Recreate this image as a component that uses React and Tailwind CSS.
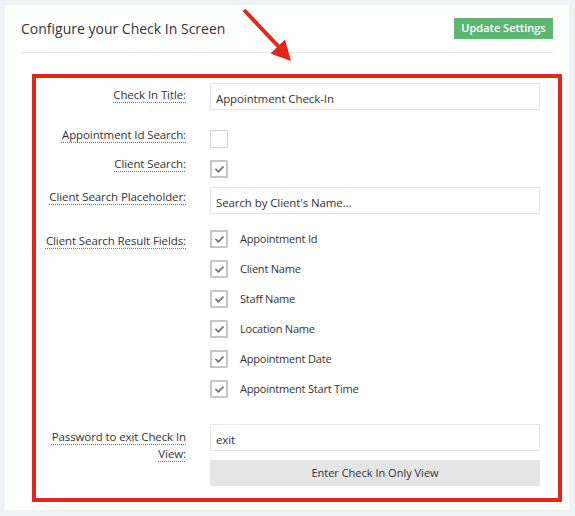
import React from "react";
import { FaCheck } from "react-icons/fa";

const labelClass =
  "w-[150px] shrink-0 pl-[8px] text-right text-[11.5px] leading-[17px] tracking-[-0.1px] text-[#333]";
const abbrClass =
  "underline decoration-dotted decoration-[#777] underline-offset-[3px]";

const resultFields = [
  "Appointment Id",
  "Client Name",
  "Staff Name",
  "Location Name",
  "Appointment Date",
  "Appointment Start Time",
];

const Checkbox = ({ checked }) =>
  checked ? (
    <span className="flex h-[18px] w-[18px] items-center justify-center border-2 border-[#c6c6c6] bg-white">
      <FaCheck size={9} className="text-[#777]" />
    </span>
  ) : (
    <span className="block h-[18px] w-[18px] border border-[#d2d2d2] bg-white"></span>
  );

const TextInput = ({ value }) => (
  <input
    readOnly
    value={value}
    className="block h-[27px] w-[330px] border border-[#e6e6e6] bg-white px-[5px] pt-[4px] text-[11.5px] tracking-[-0.1px] text-[#333] outline-none"
  />
);

export default function App() {
  return (
    <div
      className="relative h-[516px] w-[575px] overflow-hidden bg-[#eef2f5] pl-[5px] pt-[5px]"
      style={{ fontFamily: '"Open Sans", "Liberation Sans", sans-serif' }}
    >
      <div className="h-[505px] w-[564px] bg-white">
        {/* Header */}
        <div className="mx-[16px] flex items-center justify-between border-b border-[#e8e8e8] pb-[13px] pt-[13px]">
          <h2 className="text-[14px] leading-[21px] text-[#333]">
            Configure your Check In Screen
          </h2>
          <button className="h-[21px] w-[99px] bg-[#5cb870] text-[11px] font-semibold text-white">
            Update Settings
          </button>
        </div>

        {/* Settings form */}
        <div className="ml-[27px] mt-[21px] h-[428px] w-[530px] border-4 border-[#e2261c] pt-[5px]">
          <div className="flex gap-[24px]">
            <div className={`${labelClass} whitespace-nowrap pt-[3px]`}>
              <span className={abbrClass}>Check In Title:</span>
            </div>
            <TextInput value="Appointment Check-In" />
          </div>

          <div className="mt-[15px] flex gap-[24px]">
            <div className={`${labelClass} whitespace-nowrap pt-[1px]`}>
              <span className={abbrClass}>Appointment Id Search:</span>
            </div>
            <div className="pt-[5px]">
              <Checkbox checked={false} />
            </div>
          </div>

          <div className="mt-[6px] flex gap-[24px]">
            <div className={`${labelClass} whitespace-nowrap pt-[1px]`}>
              <span className={abbrClass}>Client Search:</span>
            </div>
            <div className="pt-[6px]">
              <Checkbox checked />
            </div>
          </div>

          <div className="mt-[9px] flex gap-[24px]">
            <div className={`${labelClass} whitespace-nowrap pt-[1px]`}>
              <span className={abbrClass}>Client Search Placeholder:</span>
            </div>
            <TextInput value="Search by Client's Name..." />
          </div>

          <div className="mt-[16px] flex gap-[24px]">
            <div className={`${labelClass} whitespace-nowrap pt-[2px]`}>
              <span className={abbrClass}>Client Search Result Fields:</span>
            </div>
            <div className="flex flex-col gap-[12px]">
              {resultFields.map((field) => (
                <div key={field} className="flex items-center gap-[12px]">
                  <Checkbox checked />
                  <span className="text-[11px] leading-[18px] tracking-[-0.2px] text-[#333]">
                    {field}
                  </span>
                </div>
              ))}
            </div>
          </div>

          <div className="mt-[26px] flex gap-[24px]">
            <div className={`${labelClass} pl-[12px] pt-[4px]`}>
              <span className={abbrClass}>Password to exit Check In View:</span>
            </div>
            <div>
              <TextInput value="exit" />
              <button className="mt-[9px] block h-[26px] w-[330px] bg-[#e5e5e5] text-[11px] text-[#333]">
                Enter Check In Only View
              </button>
            </div>
          </div>
        </div>
      </div>

      {/* Annotation arrow */}
      <svg
        className="pointer-events-none absolute left-0 top-0"
        width="575"
        height="80"
        viewBox="0 0 575 80"
      >
        <line
          x1="244"
          y1="10"
          x2="279"
          y2="47"
          stroke="#e2261c"
          strokeWidth="4"
        />
        <polygon points="291,61 270.5,53.5 285,39.5" fill="#e2261c" />
      </svg>
    </div>
  );
}
